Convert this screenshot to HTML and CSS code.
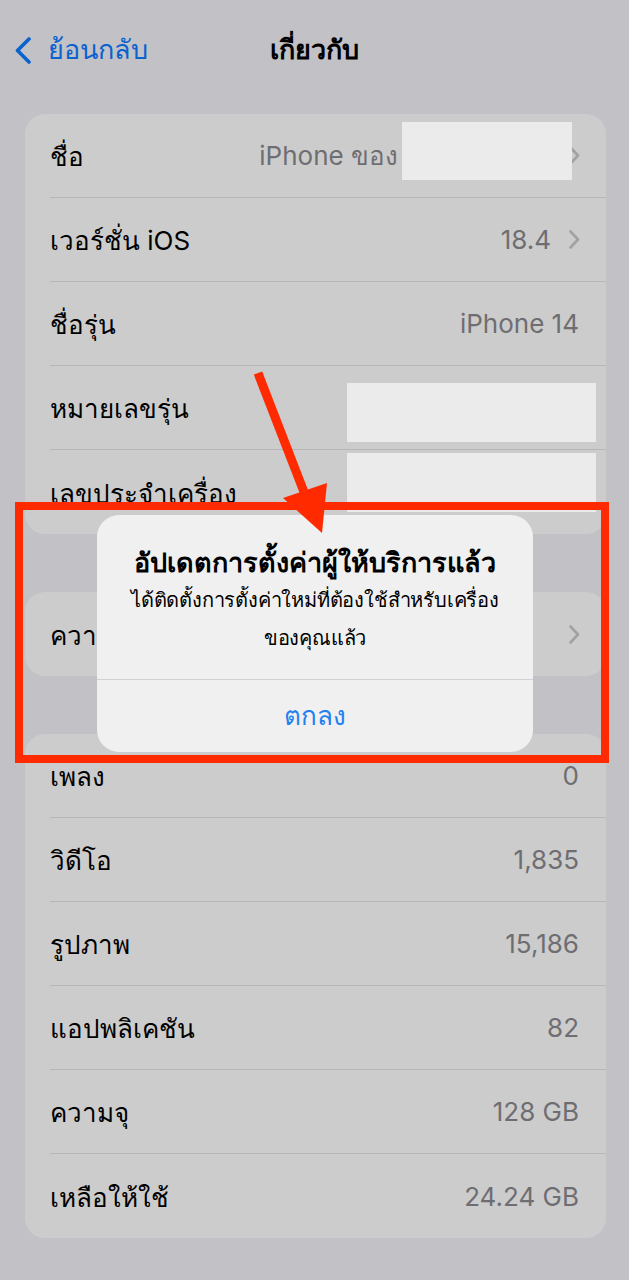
FILE: index.html
```html
<!DOCTYPE html>
<html>

<head>
    <meta charset='utf-8'>
    <title>เกี่ยวกับ</title>
    <meta name='viewport' content='width=device-width, initial-scale=1'>
    <link rel="stylesheet" href="styles.css">
</head>

<body>
    <div id="screen">
        <header class="navbar">
            <a class="back">
                <svg width="18" height="27" viewBox="0 0 18 27">
                    <path d="M15 2 L3.5 13.5 L15 25" fill="none" stroke="#0a62cf" stroke-width="3.6"
                        stroke-linecap="round" stroke-linejoin="round" />
                </svg>
                <span>ย้อนกลับ</span>
            </a>
            <h1 class="title">เกี่ยวกับ</h1>
        </header>

        <section class="card">
            <div class="row">
                <span class="label">ชื่อ</span>
                <span class="value value-name">iPhone ของ</span>
                <svg class="chev" width="11" height="19" viewBox="0 0 11 19">
                    <path d="M1.5 1.5 L9 9.5 L1.5 17.5" fill="none" stroke="#a2a2a4" stroke-width="2.6"
                        stroke-linecap="round" stroke-linejoin="round" />
                </svg>
                <div class="redact redact-name"></div>
            </div>
            <div class="row">
                <span class="label">เวอร์ชั่น iOS</span>
                <span class="value">18.4</span>
                <svg class="chev" width="11" height="19" viewBox="0 0 11 19">
                    <path d="M1.5 1.5 L9 9.5 L1.5 17.5" fill="none" stroke="#a2a2a4" stroke-width="2.6"
                        stroke-linecap="round" stroke-linejoin="round" />
                </svg>
            </div>
            <div class="row">
                <span class="label">ชื่อรุ่น</span>
                <span class="value">iPhone 14</span>
            </div>
            <div class="row">
                <span class="label">หมายเลขรุ่น</span>
                <span class="value"></span>
                <div class="redact redact-wide"></div>
            </div>
            <div class="row">
                <span class="label">เลขประจำเครื่อง</span>
                <span class="value"></span>
                <div class="redact redact-wide redact-top"></div>
            </div>
        </section>

        <section class="card">
            <div class="row">
                <span class="label">ความ</span>
                <span class="value"></span>
                <svg class="chev" width="11" height="19" viewBox="0 0 11 19">
                    <path d="M1.5 1.5 L9 9.5 L1.5 17.5" fill="none" stroke="#a2a2a4" stroke-width="2.6"
                        stroke-linecap="round" stroke-linejoin="round" />
                </svg>
            </div>
        </section>

        <section class="card">
            <div class="row">
                <span class="label">เพลง</span>
                <span class="value">0</span>
            </div>
            <div class="row">
                <span class="label">วิดีโอ</span>
                <span class="value">1,835</span>
            </div>
            <div class="row">
                <span class="label">รูปภาพ</span>
                <span class="value">15,186</span>
            </div>
            <div class="row">
                <span class="label">แอปพลิเคชัน</span>
                <span class="value">82</span>
            </div>
            <div class="row">
                <span class="label">ความจุ</span>
                <span class="value">128 GB</span>
            </div>
            <div class="row">
                <span class="label">เหลือให้ใช้</span>
                <span class="value">24.24 GB</span>
            </div>
        </section>

        <!-- alert over the list -->
        <div class="alert">
            <div class="alert-body">
                <div class="alert-title">อัปเดตการตั้งค่าผู้ให้บริการแล้ว</div>
                <div class="alert-msg">ได้ติดตั้งการตั้งค่าใหม่ที่ต้องใช้สำหรับเครื่อง<br>ของคุณแล้ว</div>
            </div>
            <div class="alert-btn">ตกลง</div>
        </div>

        <!-- red annotation -->
        <div class="mark-box"></div>
        <svg class="mark-arrow" width="100" height="180" viewBox="0 0 100 180">
            <line x1="18" y1="13" x2="64" y2="132" stroke="#ff2a00" stroke-width="9" />
            <polygon points="43,138 87,123 82,173" fill="#ff2a00" />
        </svg>
    </div>
</body>

</html>
```

FILE: styles.css
```css
* {
    box-sizing: border-box;
}

html,
body {
    margin: 0;
    padding: 0;
    background-color: #c1c1c6;
}

#screen {
    position: relative;
    width: 629px;
    min-height: 1280px;
    padding-bottom: 40px;
    font-family: "Inter", "Noto Sans", "DejaVu Sans", sans-serif;
    color: #000;
}

.navbar {
    position: relative;
    height: 100px;
    display: flex;
    align-items: center;
    justify-content: center;
}

.back {
    position: absolute;
    left: 14px;
    top: 0;
    bottom: 0;
    display: flex;
    align-items: center;
    gap: 16px;
    color: #0a62cf;
    font-size: 27px;
}

.back span {
    margin-top: -2px;
}

.title {
    margin: 0 0 2px;
    font-size: 27px;
    font-weight: 600;
}

.card {
    margin: 14px 23px 58px 25px;
    background-color: #cccccc;
    border-radius: 20px;
    overflow: hidden;
}

.card + .card {
    margin-top: 0;
}

.row {
    position: relative;
    height: 84px;
    margin-left: 25px;
    padding-right: 27px;
    display: flex;
    align-items: center;
    gap: 18px;
    border-bottom: 1px solid #b6b6b8;
    font-size: 26px;
}

.row:last-child {
    border-bottom: none;
}

.label {
    flex: 1 1 auto;
    white-space: nowrap;
    margin-top: 2px;
}

.value {
    color: #6e6e72;
    white-space: nowrap;
}

.value-name {
    margin-right: 153px;
}

.chev {
    flex: 0 0 auto;
    margin-right: -1px;
}

.redact {
    position: absolute;
    background-color: #ebebeb;
}

.redact-name {
    top: 8px;
    right: 34px;
    width: 170px;
    height: 58px;
}

.redact-wide {
    top: 17px;
    right: 10px;
    width: 249px;
    height: 59px;
}

.redact-top {
    top: 3px;
}

.alert {
    position: absolute;
    top: 515px;
    left: 97px;
    width: 436px;
    background-color: #f0f0f0;
    border-radius: 22px;
    text-align: center;
}

.alert-body {
    padding: 30px 8px 22px;
    border-bottom: 1px solid #d2d2d4;
}

.alert-title {
    font-size: 27px;
    font-weight: 700;
    line-height: 36px;
}

.alert-msg {
    font-size: 20px;
    line-height: 38px;
    letter-spacing: -0.2px;
    white-space: nowrap;
}

.alert-btn {
    height: 72px;
    line-height: 72px;
    font-size: 26px;
    font-weight: 500;
    color: #1f80f0;
}

.mark-box {
    position: absolute;
    top: 502px;
    left: 15px;
    width: 594px;
    height: 261px;
    border: 8px solid #ff2a00;
}

.mark-arrow {
    position: absolute;
    top: 360px;
    left: 240px;
}
```
